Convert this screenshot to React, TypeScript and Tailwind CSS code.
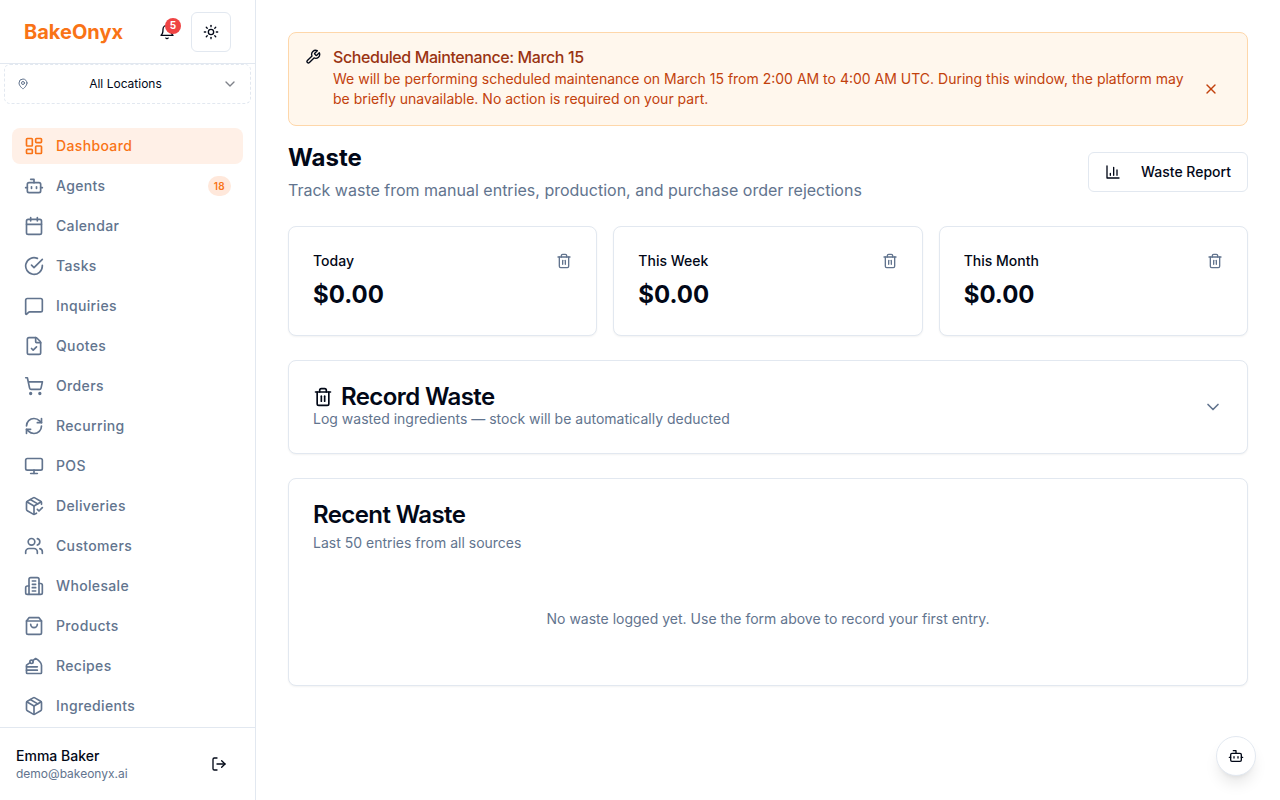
import type { ReactNode } from 'react'
import {
    Bot,
    Calendar,
    ChevronDown,
    FileCheck,
    LayoutDashboard,
    LogOut,
    MessageSquare,
    Monitor,
    Package,
    PackageCheck,
    RefreshCw,
    ShoppingCart,
    Sun,
    Trash2,
    Users,
    X,
} from 'lucide-react'

interface IconProps {
    className?: string
}

function Svg({ className, children }: IconProps & { children: ReactNode }) {
    return (
        <svg
            viewBox="0 0 24 24"
            fill="none"
            stroke="currentColor"
            strokeWidth="2"
            strokeLinecap="round"
            strokeLinejoin="round"
            className={className}
            aria-hidden="true"
        >
            {children}
        </svg>
    )
}

const Bell = ({ className }: IconProps) => (
    <Svg className={className}>
        <path d="M6 8a6 6 0 0 1 12 0c0 7 3 9 3 9H3s3-2 3-9" />
        <path d="M10.3 21a1.94 1.94 0 0 0 3.4 0" />
    </Svg>
)

const Pin = ({ className }: IconProps) => (
    <Svg className={className}>
        <path d="M20 10c0 6-8 12-8 12s-8-6-8-12a8 8 0 0 1 16 0Z" />
        <circle cx="12" cy="10" r="3" />
    </Svg>
)

const CheckCircle = ({ className }: IconProps) => (
    <Svg className={className}>
        <path d="M22 11.08V12a10 10 0 1 1-5.93-9.14" />
        <path d="m9 11 3 3L22 4" />
    </Svg>
)

const Building = ({ className }: IconProps) => (
    <Svg className={className}>
        <path d="M6 22V4a2 2 0 0 1 2-2h8a2 2 0 0 1 2 2v18Z" />
        <path d="M6 12H4a2 2 0 0 0-2 2v6a2 2 0 0 0 2 2h2" />
        <path d="M18 9h2a2 2 0 0 1 2 2v9a2 2 0 0 1-2 2h-2" />
        <path d="M10 6h4M10 10h4M10 14h4M10 18h4" />
    </Svg>
)

const Bag = ({ className }: IconProps) => (
    <Svg className={className}>
        <path d="M6 2 3 6v14a2 2 0 0 0 2 2h14a2 2 0 0 0 2-2V6l-3-4Z" />
        <path d="M3 6h18" />
        <path d="M16 10a4 4 0 0 1-8 0" />
    </Svg>
)

const Cake = ({ className }: IconProps) => (
    <Svg className={className}>
        <circle cx="9" cy="7" r="2" />
        <path d="M7.2 7.9 3 11v9c0 .6.4 1 1 1h16c.6 0 1-.4 1-1v-9c0-2-3-6-7-8l-3.6 2.6" />
        <path d="M16 13H3M16 17H3" />
    </Svg>
)

const Wrench = ({ className }: IconProps) => (
    <Svg className={className}>
        <path d="M14.7 6.3a1 1 0 0 0 0 1.4l1.6 1.6a1 1 0 0 0 1.4 0l3.77-3.77a6 6 0 0 1-7.94 7.94l-6.91 6.91a2.12 2.12 0 0 1-3-3l6.91-6.91a6 6 0 0 1 7.94-7.94l-3.76 3.76z" />
    </Svg>
)

const BarChart = ({ className }: IconProps) => (
    <Svg className={className}>
        <path d="M3 3v18h18" />
        <path d="M18 17V9M13 17V5M8 17v-3" />
    </Svg>
)

const navItems = [
    { label: 'Dashboard', icon: LayoutDashboard, active: true },
    { label: 'Agents', icon: Bot, count: 18 },
    { label: 'Calendar', icon: Calendar },
    { label: 'Tasks', icon: CheckCircle },
    { label: 'Inquiries', icon: MessageSquare },
    { label: 'Quotes', icon: FileCheck },
    { label: 'Orders', icon: ShoppingCart },
    { label: 'Recurring', icon: RefreshCw },
    { label: 'POS', icon: Monitor },
    { label: 'Deliveries', icon: PackageCheck },
    { label: 'Customers', icon: Users },
    { label: 'Wholesale', icon: Building },
    { label: 'Products', icon: Bag },
    { label: 'Recipes', icon: Cake },
    { label: 'Ingredients', icon: Package },
]

const stats = [
    { label: 'Today', value: 0 },
    { label: 'This Week', value: 0 },
    { label: 'This Month', value: 0 },
]

function Card({ className = '', children }: IconProps & { children: ReactNode }) {
    return <section className={`rounded-lg border border-slate-200 bg-white p-6 shadow-xs ${className}`}>{children}</section>
}

function Sidebar() {
    return (
        <aside className="flex w-64 shrink-0 flex-col border-r border-slate-200">
            <div className="flex h-16 shrink-0 items-center justify-between border-b border-slate-200 px-6">
                <span className="text-xl font-bold text-[#f97316]">BakeOnyx</span>
                <div className="flex items-center gap-1">
                    <button type="button" aria-label="Notifications" className="relative flex size-10 items-center justify-center rounded-md">
                        <Bell className="size-4" />
                        <span className="absolute top-1.5 right-1.5 flex size-4 items-center justify-center rounded-full bg-[#ef4444] text-[10px] font-bold text-white">
                            5
                        </span>
                    </button>
                    <button type="button" aria-label="Toggle theme" className="flex size-10 items-center justify-center rounded-md border border-slate-200">
                        <Sun className="size-4" />
                    </button>
                </div>
            </div>

            <div className="px-1">
                <button type="button" className="flex h-10 w-full items-center justify-between rounded-md border border-dashed border-slate-200 px-3 text-xs">
                    <Pin className="size-3 text-slate-500" />
                    <span>All Locations</span>
                    <ChevronDown className="size-4 opacity-50" />
                </button>
            </div>

            <nav className="mt-6 min-h-0 flex-1 space-y-1 overflow-hidden px-3">
                {navItems.map(({ label, icon: Icon, active, count }) => (
                    <a
                        key={label}
                        href="#"
                        className={`flex h-9 items-center gap-3 rounded-lg px-3 text-sm font-medium tracking-wide ${
                            active ? 'bg-[#fff0e7] text-[#f97316]' : 'text-slate-500'
                        }`}
                    >
                        <Icon className="size-5" />
                        <span className="flex-1">{label}</span>
                        {count && (
                            <span className="flex h-5 items-center rounded-full bg-[#ffe8db] px-1.5 text-[10px] font-semibold text-[#f97316]">{count}</span>
                        )}
                    </a>
                ))}
            </nav>

            <div className="flex shrink-0 items-center justify-between border-t border-slate-200 p-4">
                <div>
                    <p className="text-sm font-medium">Emma Baker</p>
                    <p className="text-xs text-slate-500">demo@bakeonyx.ai</p>
                </div>
                <button type="button" aria-label="Log out" className="flex size-10 items-center justify-center rounded-md">
                    <LogOut className="size-4" />
                </button>
            </div>
        </aside>
    )
}

export default function App() {
    return (
        <div className="flex h-screen bg-white font-['Inter',sans-serif] text-[#020817]">
            <Sidebar />

            <main className="min-w-0 flex-1 overflow-y-auto p-8">
                <div role="alert" className="flex gap-3 rounded-lg border border-[#fed7aa] bg-[#fff7ed] p-4">
                    <Wrench className="size-4 shrink-0" />
                    <div className="flex-1">
                        <h5 className="mb-1 font-medium leading-none tracking-tight text-[#9a3412]">Scheduled Maintenance: March 15</h5>
                        <div className="flex items-center justify-between text-sm text-[#c2410c]">
                            <p>
                                We will be performing scheduled maintenance on March 15 from 2:00 AM to 4:00 AM UTC. During this window, the platform
                                may be briefly unavailable. No action is required on your part.
                            </p>
                            <button type="button" aria-label="Dismiss" className="flex h-9 shrink-0 items-center px-3">
                                <X className="size-4" />
                            </button>
                        </div>
                    </div>
                </div>

                <div className="mt-4 flex items-center justify-between">
                    <div>
                        <h1 className="text-2xl font-bold">Waste</h1>
                        <p className="mt-1 text-slate-500">Track waste from manual entries, production, and purchase order rejections</p>
                    </div>
                    <a
                        href="#"
                        className="flex h-10 min-w-40 items-center justify-between gap-4 rounded-md border border-slate-200 px-4 text-sm font-medium"
                    >
                        <BarChart className="size-4" />
                        Waste Report
                    </a>
                </div>

                <div className="mt-6 grid grid-cols-3 gap-4">
                    {stats.map((stat) => (
                        <Card key={stat.label}>
                            <div className="flex items-center justify-between">
                                <h3 className="text-sm font-medium">{stat.label}</h3>
                                <Trash2 className="size-4 text-slate-500" />
                            </div>
                            <p className="mt-2 text-2xl font-bold">${stat.value.toFixed(2)}</p>
                        </Card>
                    ))}
                </div>

                <Card className="mt-6">
                    <button type="button" aria-expanded="false" className="flex w-full items-center justify-between text-left">
                        <span>
                            <span className="flex items-center gap-2 text-2xl font-semibold leading-none tracking-tight">
                                <Trash2 className="size-5" />
                                Record Waste
                            </span>
                            <span className="block text-sm text-slate-500">Log wasted ingredients — stock will be automatically deducted</span>
                        </span>
                        <ChevronDown className="size-5 text-slate-500" />
                    </button>
                </Card>

                <Card className="mt-6">
                    <h2 className="text-2xl font-semibold leading-none tracking-tight">Recent Waste</h2>
                    <p className="mt-1.5 text-sm text-slate-500">Last 50 entries from all sources</p>
                    <p className="mt-6 py-8 text-center text-sm text-slate-500">No waste logged yet. Use the form above to record your first entry.</p>
                </Card>
            </main>

            <button
                type="button"
                aria-label="Open assistant"
                className="fixed right-6 bottom-6 flex size-10 items-center justify-center rounded-full border border-slate-200 bg-white shadow-lg"
            >
                <Bot className="size-4" />
            </button>
        </div>
    )
}
